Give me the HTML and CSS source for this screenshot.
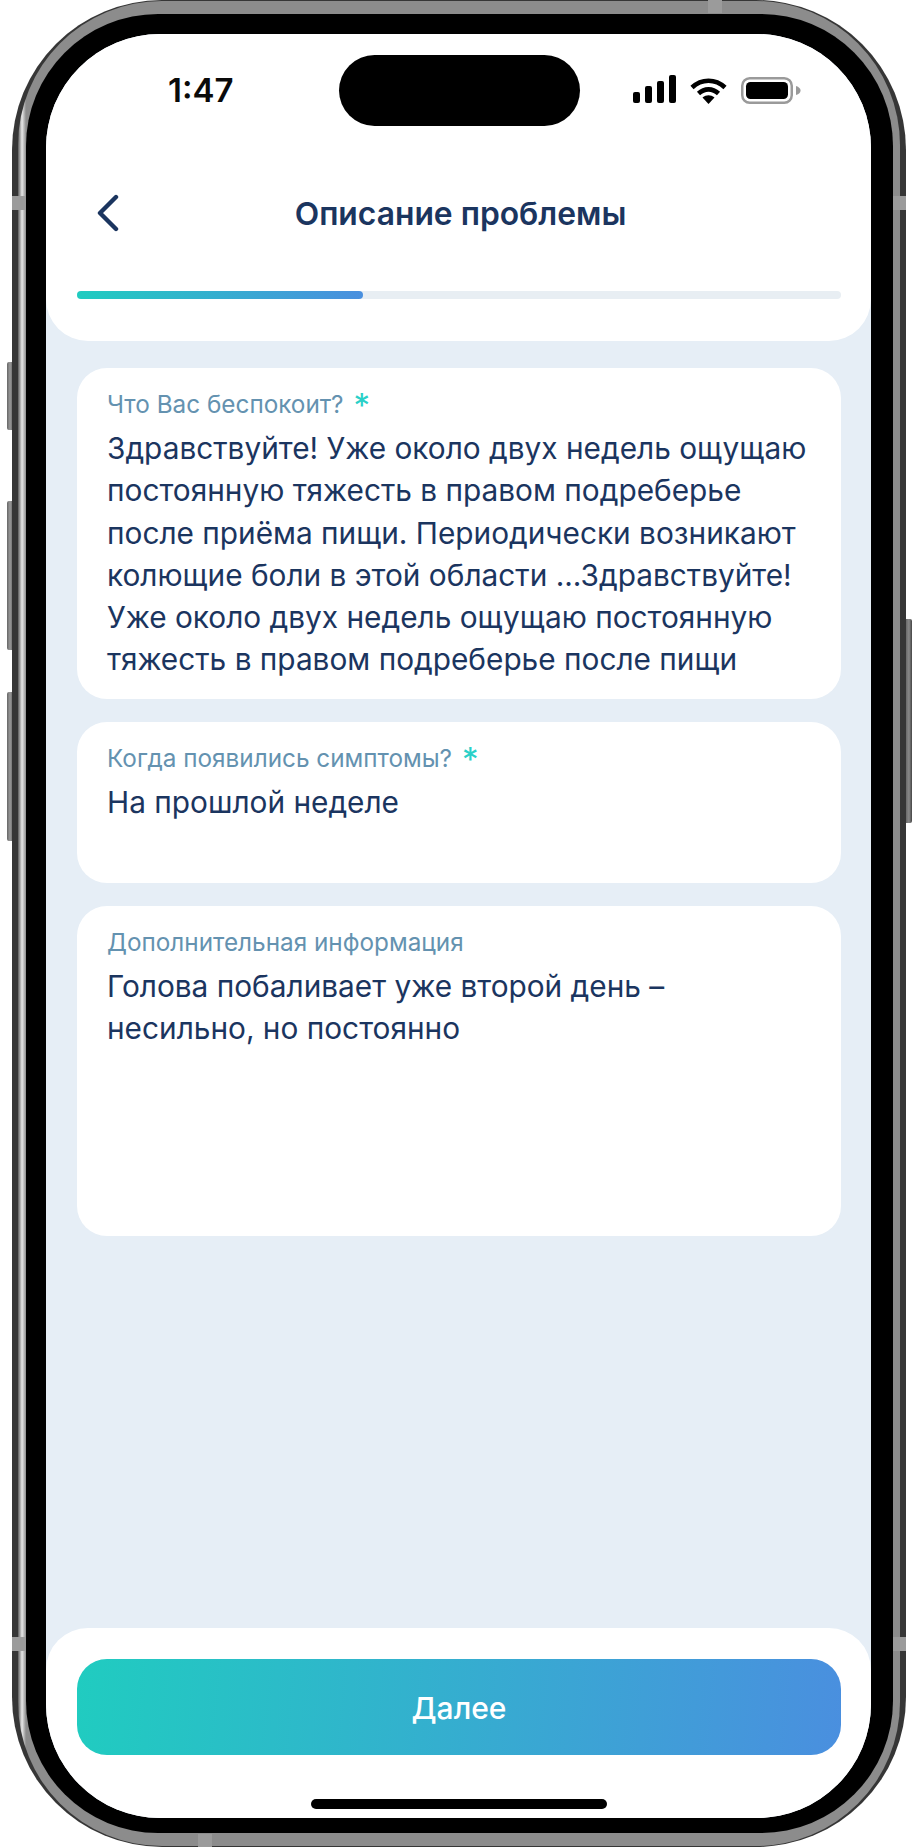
FILE: index.html
```html
<!DOCTYPE html>
<html lang="ru">
<head>
<meta charset="utf-8">
<title>Описание проблемы</title>
<link rel="stylesheet" href="styles.css">
</head>
<body>
<div class="device">
  <span class="side-btn side-btn-silent"></span>
  <span class="side-btn side-btn-up"></span>
  <span class="side-btn side-btn-down"></span>
  <span class="side-btn side-btn-power"></span>
  <div class="frame">
    <span class="band band-lt"></span>
    <span class="band band-lb"></span>
    <span class="band band-rt"></span>
    <span class="band band-rb"></span>
    <span class="band-h band-top"></span>
    <span class="band-h band-bottom"></span>
    <div class="frame-inner">
      <div class="bezel">
        <div class="screen">
          <span class="island"></span>
          <header class="header">
            <div class="status">
              <span class="time">1:47</span>
              <div class="status-icons">
                <svg class="ic-signal" width="43" height="28" viewBox="0 0 43 28"><rect x="0" y="17" width="7" height="11" rx="2"/><rect x="12" y="11" width="7" height="17" rx="2"/><rect x="24" y="6" width="7" height="22" rx="2"/><rect x="36" y="0" width="7" height="28" rx="2"/></svg>
                <svg class="ic-wifi" width="37" height="27" viewBox="0 0 37 27"><path d="M2 10.5 C11.5 1.5 25.5 1.5 35 10.5" fill="none" stroke="#000" stroke-width="4.6"/><path d="M8.5 16.5 C14.5 11 22.5 11 28.5 16.5" fill="none" stroke="#000" stroke-width="4.6"/><path d="M12.5 20.6 C16.5 17.6 20.5 17.6 24.5 20.6 L18.5 27 Z"/></svg>
                <svg class="ic-battery" width="60" height="27" viewBox="0 0 60 27"><rect x="1.25" y="1.25" width="49.5" height="24.5" rx="7.5" fill="none" stroke="#9a9a9a" stroke-width="2.5"/><rect x="5" y="5" width="42" height="17" rx="4.5"/><path d="M55 9 C58 10 59.5 11.5 59.5 13.5 C59.5 15.5 58 17 55 18 Z" fill="#9a9a9a"/></svg>
              </div>
            </div>
            <nav class="nav">
              <svg class="back" width="24" height="38" viewBox="0 0 24 38"><path d="M20 3 L4 19 L20 35" fill="none" stroke="#1b355f" stroke-width="4.4" stroke-linecap="round" stroke-linejoin="round"/></svg>
              <h1 class="title">Описание проблемы</h1>
              <span></span>
            </nav>
            <div class="progress"><div class="progress-fill"></div></div>
          </header>
          <main class="form">
            <section class="card card-tall">
              <div class="label">Что Вас беспокоит? <span class="req">*</span></div>
              <p class="value">Здравствуйте! Уже около двух недель ощущаю постоянную тяжесть в правом подреберье после приёма пищи. Периодически возникают колющие боли в этой области ...Здравствуйте! Уже около двух недель ощущаю постоянную тяжесть в правом подреберье после пищи</p>
            </section>
            <section class="card card-short">
              <div class="label">Когда появились симптомы? <span class="req">*</span></div>
              <p class="value">На прошлой неделе</p>
            </section>
            <section class="card card-last">
              <div class="label">Дополнительная информация</div>
              <p class="value">Голова побаливает уже второй день –<br>несильно, но постоянно</p>
            </section>
          </main>
          <footer class="footer">
            <button class="next">Далее</button>
            <div class="home"></div>
          </footer>
        </div>
      </div>
    </div>
  </div>
</div>
</body>
</html>
```
FILE: styles.css
```css
* { box-sizing: border-box; }
html, body { margin: 0; padding: 0; background: #fff; }
body { width: 916px; height: 1848px; padding-left: 12px; font-family: Inter, "Noto Sans", sans-serif; overflow: hidden; }

.device { position: relative; width: 894px; height: 1847px; }
.frame {
  position: relative;
  height: 100%;
  padding: 1px 6px 1px 6px;
  border-radius: 150px;
  background: #363636;
}
.frame-inner {
  height: 100%;
  padding: 13px 7px 13px 8px;
  border-radius: 144px;
  background: linear-gradient(90deg, #5a5a5a 0, #e8e8e8 4px, #8c8c8c 8px, #8c8c8c calc(100% - 7px), #8c8c8c 100%);
}
.bezel {
  height: 100%;
  padding: 20px 22px 15px 20px;
  border-radius: 132px;
  background: #000;
}
.screen {
  position: relative;
  display: flex;
  flex-direction: column;
  height: 100%;
  overflow: hidden;
  border-radius: 114px;
  background: #e6eef6;
}

.side-btn { position: absolute; background: linear-gradient(90deg, #666, #999 60%, #777); }
.side-btn-silent { left: -5px; top: 362px; width: 5px; height: 68px; border-radius: 2px 0 0 2px; }
.side-btn-up { left: -5px; top: 501px; width: 5px; height: 149px; border-radius: 2px 0 0 2px; }
.side-btn-down { left: -5px; top: 692px; width: 5px; height: 149px; border-radius: 2px 0 0 2px; }
.side-btn-power { right: -6px; top: 619px; width: 6px; height: 204px; border-radius: 0 2px 2px 0; background: linear-gradient(90deg, #6a6a6a, #8a8a8a 50%, #444); }

.band { position: absolute; z-index: 1; width: 13px; height: 14px; background: #9b9b9b; }
.band-lt { left: 0; top: 196px; }
.band-lb { left: 0; top: 1637px; }
.band-rt { right: 0; top: 196px; }
.band-rb { right: 0; top: 1637px; }
.band-h { position: absolute; z-index: 1; width: 14px; height: 13px; background: #9b9b9b; }
.band-top { left: 696px; top: 0; }
.band-bottom { left: 186px; bottom: 0; }

.island { position: absolute; left: 293px; top: 21px; width: 241px; height: 71px; border-radius: 36px; background: #000; }

.header { flex: none; height: 307px; border-radius: 0 0 42px 42px; background: #fff; }
.status { display: flex; justify-content: space-between; align-items: center; height: 112px; padding: 0 70px 0 122px; }
.time { font-size: 33px; font-weight: 600; color: #0a0a0a; }
.status-icons { display: flex; align-items: center; gap: 14px; }
.status-icons svg { display: block; }
.ic-signal { margin-top: -3px; }

.nav { display: grid; grid-template-columns: 1fr auto 1fr; align-items: center; height: 134px; padding: 0 46px 0 50px; }
.back { display: block; }
.title { margin: 0; font-size: 31.8px; font-weight: 600; color: #1b355f; }

.progress { height: 8px; margin: 11px 30px 0 31px; border-radius: 4px; background: #e8eef3; }
.progress-fill { width: 286px; height: 100%; border-radius: 4px; background: linear-gradient(90deg, #20ccc0, #4a8fdf); }

.form { flex: 1; display: flex; flex-direction: column; gap: 23px; padding: 27px 30px 0 31px; }
.card { padding: 21px 28px 0 30px; border-radius: 30px; background: #fff; }
.card-tall { height: 331px; }
.card-short { height: 161px; }
.card-last { height: 330px; }

.label { height: 30px; margin-bottom: 8px; font-size: 24.3px; line-height: 30px; color: #6492b0; white-space: nowrap; }
.req { margin-left: 3px; font-size: 33px; line-height: 20px; vertical-align: -4px; color: #2ad0c8; }
.value { margin: 0; font-size: 29.8px; line-height: 42.3px; color: #1b355f; }

.footer { flex: none; height: 190px; padding: 31px 30px 0 31px; border-radius: 42px 42px 0 0; background: #fff; }
.next {
  display: block;
  width: 100%;
  height: 96px;
  padding: 2px 0 0;
  border: 0;
  border-radius: 30px;
  background: linear-gradient(95deg, #20ccc0, #4a8fdf);
  font-family: inherit;
  font-size: 30px;
  font-weight: 500;
  color: #fff;
}
.home { width: 296px; height: 10px; margin: 44px 0 0 234px; border-radius: 5px; background: #000; }
```
